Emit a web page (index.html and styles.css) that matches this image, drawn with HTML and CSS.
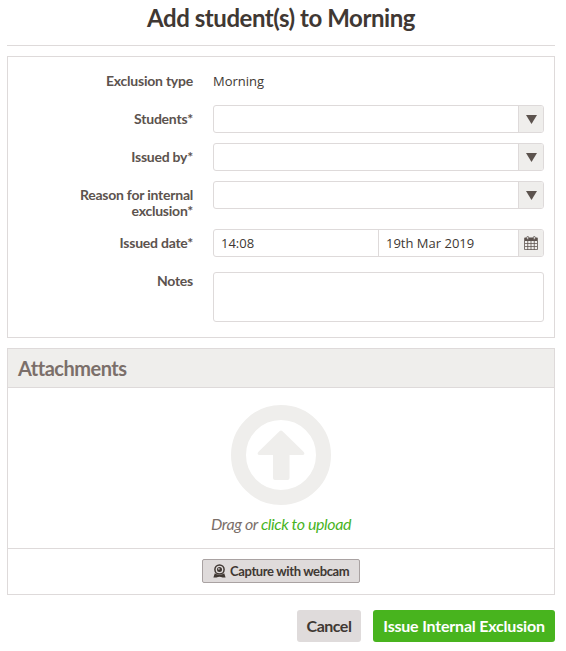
FILE: index.html
```html
<!DOCTYPE html>
<html lang="en">
<head>
  <meta charset="UTF-8">
  <meta name="viewport" content="width=device-width, initial-scale=1.0">
  <title>Add student(s) to Morning</title>
  <link rel="stylesheet" href="styles.css">
</head>
<body>

  <h1 class="title">Add student(s) to Morning</h1>

  <form class="panel form">
    <div class="row">
      <label class="label">Exclusion type</label>
      <div class="static">Morning</div>
    </div>

    <div class="row">
      <label class="label">Students*</label>
      <div class="field">
        <div class="value"></div>
        <div class="addon"><svg width="11" height="9" viewBox="0 0 11 9"><path d="M0 0h11L5.500 9z" /></svg></div>
      </div>
    </div>

    <div class="row">
      <label class="label">Issued by*</label>
      <div class="field">
        <div class="value"></div>
        <div class="addon"><svg width="11" height="9" viewBox="0 0 11 9"><path d="M0 0h11L5.500 9z" /></svg></div>
      </div>
    </div>

    <div class="row">
      <label class="label">Reason for internal exclusion*</label>
      <div class="field">
        <div class="value"></div>
        <div class="addon"><svg width="11" height="9" viewBox="0 0 11 9"><path d="M0 0h11L5.500 9z" /></svg></div>
      </div>
    </div>

    <div class="row row-date">
      <label class="label">Issued date*</label>
      <div class="field">
        <div class="value time">14:08</div>
        <div class="value date">19th Mar 2019</div>
        <div class="addon">
          <svg width="14" height="14" viewBox="0 0 14 14">
            <path fill-rule="evenodd" d="M1 1.500h12a.8.8 0 0 1 .8.8v10.900a.8.8 0 0 1-.8.8H1a.8.8 0 0 1-.8-.8V2.300a.8.8 0 0 1 .8-.8zM1 5v2.200h2.400V5zm3.200 0v2.200h2.400V5zm3.200 0v2.200h2.400V5zm3.200 0v2.200H13V5zM1 8v2.200h2.400V8zm3.200 0v2.200h2.400V8zm3.200 0v2.200h2.400V8zm3.200 0v2.200H13V8zM1 11v2.200h2.400V11zm3.200 0v2.200h2.400V11zm3.200 0v2.200h2.400V11zm3.200 0v2.200H13V11z" />
            <rect class="ring" x="2.800" y=".4" width="1.800" height="3" rx=".9" />
            <rect class="ring" x="9.400" y=".4" width="1.800" height="3" rx=".9" />
          </svg>
        </div>
      </div>
    </div>

    <div class="row row-notes">
      <label class="label">Notes</label>
      <div class="field notes"></div>
    </div>
  </form>

  <div class="panel attachments">
    <h2 class="panel-title">Attachments</h2>
    <div class="dropzone">
      <svg class="upload-icon" width="100" height="100" viewBox="0 0 100 100">
        <circle cx="50" cy="50" r="42.500" />
        <path d="M48.500 26.200q1.500-1.500 3 0l21 20.600q2.200 3-1 3.200H58.500v23q0 2-2 2H44q-2 0-2-2V50H28.500q-3.200-.2-1-3.200z" />
      </svg>
      <p class="hint">Drag or <a class="link">click to upload</a></p>
    </div>
    <div class="webcam">
      <button type="button" class="btn-webcam">
        <svg width="13" height="14" viewBox="0 0 13 14">
          <circle class="outline" cx="6.500" cy="5.500" r="4.600" />
          <circle class="lens" cx="6.500" cy="5.500" r="2.500" />
          <circle class="glint" cx="5.900" cy="4.900" r=".8" />
          <path d="M1.800 9.300q4.700 3.400 9.400 0l1.400 4.200H9.500q-3-1.500-6 0H.4z" />
        </svg>
        Capture with webcam
      </button>
    </div>
  </div>

  <div class="actions">
    <button type="button" class="btn btn-cancel">Cancel</button>
    <button type="button" class="btn btn-submit">Issue Internal Exclusion</button>
  </div>

</body>
</html>
```
FILE: styles.css
```css
:root {
  --border: #dedada;
  --grey: #efeeec;
  --text: #403833;
  --label: #5c534e;
  --green: #48b41e;
}

* {
  box-sizing: border-box;
}

body {
  margin: 0;
  padding: 0 11px 0 7px;
  font-family: Lato, sans-serif;
  font-size: 14px;
  color: var(--text);
  background: #fff;
}

.title {
  height: 46px;
  margin: 0 0 10px;
  border-bottom: 1px solid var(--border);
  font-size: 24px;
  line-height: 36px;
  letter-spacing: -0.45px;
  text-align: center;
  white-space: nowrap;
}

.panel {
  border: 1px solid var(--border);
}

.form {
  height: 282px;
  padding: 10px 10px 15px;
}

.row {
  display: flex;
  margin-bottom: 10px;
}

.row-date {
  margin-bottom: 15px;
}

.label {
  width: 175px;
  padding-top: 6px;
  padding-left: 40px;
  margin-right: 20px;
  font-weight: bold;
  line-height: 16px;
  letter-spacing: -0.23px;
  color: var(--label);
  text-align: right;
}

.row-notes .label {
  padding-top: 1px;
}

.static,
.value {
  font-family: "Open Sans", sans-serif;
  font-size: 13px;
}

.static {
  line-height: 28px;
}

.field {
  display: flex;
  flex: 1;
  height: 28px;
  border: 1px solid var(--border);
  border-radius: 3px;
  overflow: hidden;
}

.value {
  flex: 1;
  padding-left: 7px;
  line-height: 27px;
}

.time {
  flex: none;
  width: 164px;
}

.date {
  border-left: 1px solid var(--border);
}

.addon {
  display: flex;
  align-items: center;
  justify-content: center;
  width: 25px;
  border-left: 1px solid var(--border);
  background: var(--grey);
  fill: #5c534e;
}

.ring {
  fill: #efeeec;
  stroke: #5c534e;
  stroke-width: 0.8;
}

.notes {
  height: 50px;
}

.attachments {
  height: 247px;
  margin-top: 10px;
}

.panel-title {
  height: 39px;
  margin: 0;
  padding-left: 10px;
  border-bottom: 1px solid var(--border);
  background: var(--grey);
  font-size: 20px;
  line-height: 38px;
  letter-spacing: -0.5px;
  color: #7b6f6a;
}

.dropzone {
  display: flex;
  flex-direction: column;
  align-items: center;
  height: 161px;
  padding-top: 17px;
  border-bottom: 1px solid var(--border);
}

.upload-icon {
  fill: var(--grey);
}

.upload-icon circle {
  fill: none;
  stroke: var(--grey);
  stroke-width: 15;
}

.hint {
  margin: 7px 0 0;
  font-size: 16px;
  font-style: italic;
  line-height: 24px;
  letter-spacing: -0.4px;
  color: #7b6f6a;
}

.link {
  color: var(--green);
}

.webcam {
  display: flex;
  justify-content: center;
  padding-top: 10px;
}

button {
  font-family: inherit;
  font-weight: bold;
  color: var(--text);
  white-space: nowrap;
}

.btn-webcam {
  display: flex;
  align-items: center;
  gap: 4px;
  width: 158px;
  height: 24px;
  padding: 0 0 0 10px;
  border: 1px solid #a9a2a2;
  border-radius: 2px;
  background: #dfdbdb;
  font-size: 13px;
  letter-spacing: -0.37px;
}

.btn-webcam svg {
  flex: none;
  fill: var(--text);
}

.outline,
.glint {
  fill: #dfdbdb;
}

.outline {
  stroke: var(--text);
  stroke-width: 1.5;
}

.actions {
  display: flex;
  justify-content: flex-end;
  gap: 12px;
  margin-top: 15px;
}

.btn {
  height: 32px;
  padding: 0 0 2px;
  border: none;
  border-radius: 3px;
  font-size: 16px;
  letter-spacing: -0.2px;
}

.btn-cancel {
  width: 64px;
  background: #dfdbdb;
  letter-spacing: -0.5px;
}

.btn-submit {
  width: 182px;
  background: var(--green);
  color: #fff;
}
```
